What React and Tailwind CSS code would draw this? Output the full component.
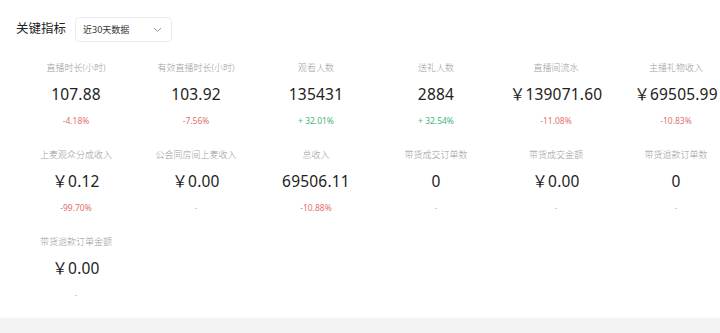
import React from "react";

const rows = [
  [
    { label: "直播时长(小时)", value: "107.88", change: "-4.18%", type: "down" },
    { label: "有效直播时长(小时)", value: "103.92", change: "-7.56%", type: "down" },
    { label: "观看人数", value: "135431", change: "+ 32.01%", type: "up" },
    { label: "送礼人数", value: "2884", change: "+ 32.54%", type: "up" },
    { label: "直播间流水", value: "￥139071.60", change: "-11.08%", type: "down" },
    { label: "主播礼物收入", value: "￥69505.99", change: "-10.83%", type: "down" },
  ],
  [
    { label: "上麦观众分成收入", value: "￥0.12", change: "-99.70%", type: "down" },
    { label: "公会同房间上麦收入", value: "￥0.00", change: "-", type: "none" },
    { label: "总收入", value: "69506.11", change: "-10.88%", type: "down" },
    { label: "带货成交订单数", value: "0", change: "-", type: "none" },
    { label: "带货成交金额", value: "￥0.00", change: "-", type: "none" },
    { label: "带货退款订单数", value: "0", change: "-", type: "none" },
  ],
  [{ label: "带货退款订单金额", value: "￥0.00", change: "-", type: "none" }],
];

function Cell({ item }) {
  const color =
    item.type === "down"
      ? "text-[#e2716f]"
      : item.type === "up"
      ? "text-[#45b57d]"
      : "text-[#bdbdbd]";
  return (
    <div className="flex flex-col items-center h-[87px]">
      <div className="h-[21px] flex items-center text-[9px] text-[#9c9c9c] font-light whitespace-nowrap">
        {item.label}
      </div>
      <div className="mt-[6px] h-[22px] flex items-center text-[15.5px] text-[#222] whitespace-nowrap tracking-[0.2px]">
        {item.value}
      </div>
      <div className={`mt-[8px] h-[14px] flex items-center text-[8.5px] whitespace-nowrap ${color}`}>
        {item.change}
      </div>
    </div>
  );
}

export default function App() {
  return (
    <div
      className="w-[720px] h-[333px] bg-[#f3f3f3] overflow-hidden flex flex-col"
      style={{ fontFamily: '"Noto Sans", "Noto Sans CJK SC", sans-serif' }}
    >
      <div className="bg-white h-[318px] flex flex-col">
        <div className="flex items-center pl-4 pt-[17px] h-[42px]">
          <div className="text-[12.5px] text-[#222]">关键指标</div>
          <div className="ml-[9px] w-[97px] h-[25px] border border-[#ececec] rounded-[4px] flex items-center justify-between pl-[7px] pr-[9px]">
            <span className="text-[9px] text-[#333]">近30天数据</span>
            <svg width="9" height="6" viewBox="0 0 9 6" fill="none">
              <path d="M1 1l3.5 3.5L8 1" stroke="#999" strokeWidth="1" />
            </svg>
          </div>
        </div>
        <div className="pl-4 pt-[15px]">
          {rows.map((row, i) => (
            <div key={i} className="grid grid-cols-[repeat(6,120px)]">
              {row.map((item, j) => (
                <Cell key={j} item={item} />
              ))}
            </div>
          ))}
        </div>
      </div>
    </div>
  );
}
